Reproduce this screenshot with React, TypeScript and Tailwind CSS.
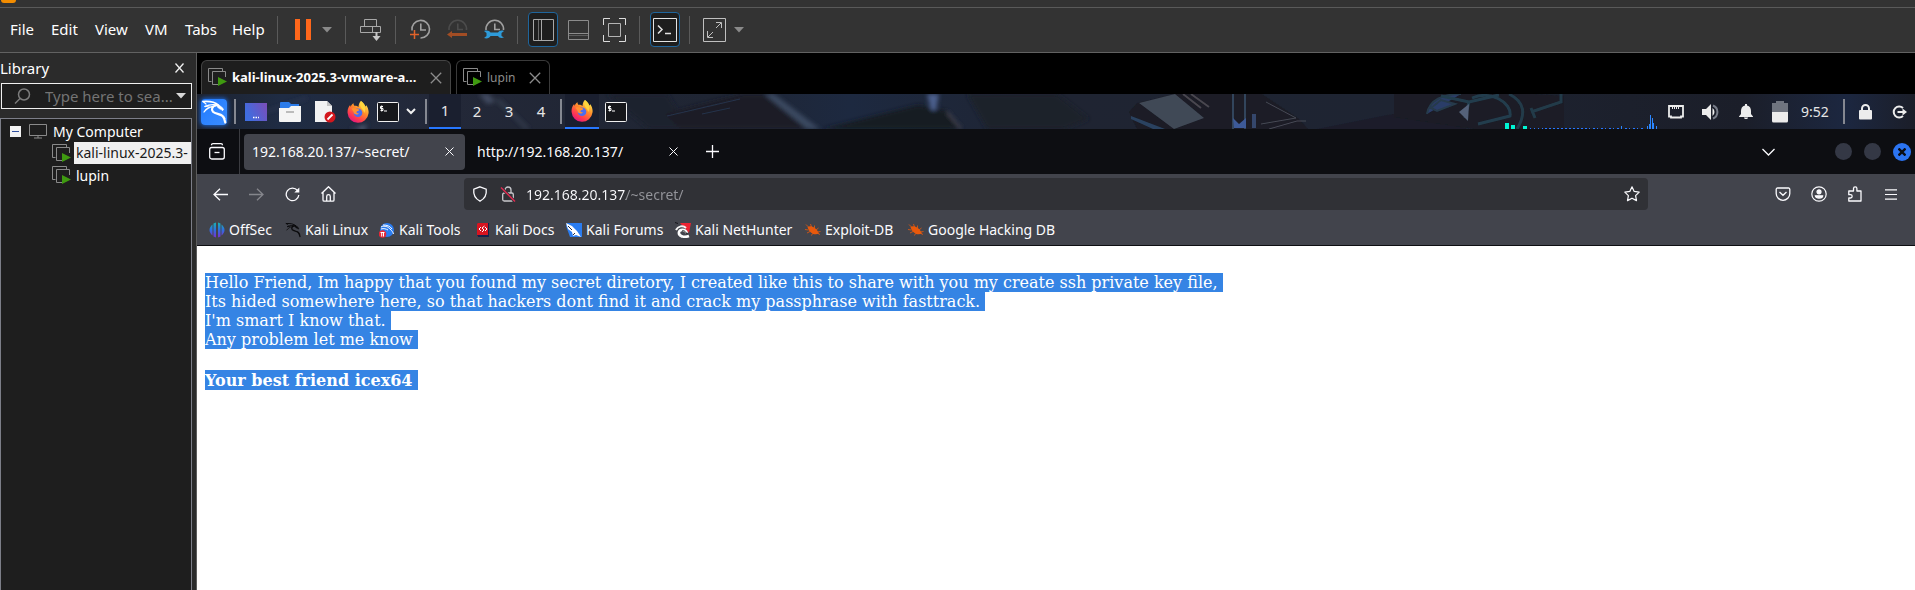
import React from 'react';

type IconProps = { className?: string };

const VmIcon = () => (
  <svg width="19" height="19" viewBox="0 0 19 19" fill="none" className="shrink-0">
    <path d="M3.500 13.500H.5V.5h14v3" stroke="#8a8a8a" />
    <path d="M10 16.500H4.500V3.500h13V9" stroke="#8a8a8a" />
    <path d="M10 9l9 4.500-9 4.500z" fill="#3f9a10" />
  </svg>
);

const Caret = ({ className }: IconProps) => (
  <svg width="10" height="6" viewBox="0 0 10 6" className={className || 'text-[#8a8a8a]'}>
    <path d="M0 0h10L5 5.500z" fill="currentColor" />
  </svg>
);

const Cross = ({ className }: IconProps) => (
  <svg width="12" height="12" viewBox="0 0 12 12" className={className} stroke="currentColor" strokeWidth="1.3">
    <path d="M.8.8l10.400 10.400M11.200.8L.8 11.200" />
  </svg>
);

const Dragon = ({ size }: { size: number }) => (
  <svg width={size} height={size} viewBox="0 0 26 26" fill="none" stroke="currentColor" strokeLinecap="round">
    <path d="M2 2.500c7-.5 12 .5 15.500 3.500" strokeWidth="1.600" />
    <path d="M4 7.500c4-2 8-2.200 12-1.500" strokeWidth="1.400" />
    <path d="M3 13c2-3 5-5 9-5.500" strokeWidth="1.300" />
    <path d="M2 2.500l3 2.500M4 7.500l4-.5" strokeWidth="1.200" />
    <path d="M16 5.500c3 .8 4.500 2.500 6.500 4.500l-1 1.800-1.500-1.500c-2-.6-3.500-1.300-4-3.800z" fill="currentColor" strokeWidth=".8" />
    <path d="M15 6.500c-4 .5-5 4-3 6.200 2.500 2.500 7 1.800 9.500 4.300 1.800 1.800 2.300 4 2.800 6.500" strokeWidth="2.200" />
    <path d="M19 15.500c3 .3 4.500 2 5 4" strokeWidth="1" />
  </svg>
);

const ClockFace = ({ color }: { color: string }) => (
  <g stroke={color} fill="none" strokeWidth="1.600">
    <path d="M2 11.500A8.800 8.800 0 1 1 10.500 19" />
    <path d="M10.800 4.500v6.500H16" />
  </g>
);

const HalfClock = ({ color }: { color: string }) => (
  <g stroke={color} fill="none" strokeWidth="1.600">
    <path d="M2 11A8.800 8.800 0 1 1 19.500 11" />
    <path d="M10.800 4.500v6H16" />
  </g>
);

const Firefox = ({ id }: { id: string }) => (
  <svg width="22" height="22" viewBox="0 0 22 22">
    <defs>
      <linearGradient id={id} x1="0.8" y1="0.1" x2="0.25" y2="0.95">
        <stop offset="0" stopColor="#ffe04a" />
        <stop offset="0.4" stopColor="#ff8a2a" />
        <stop offset="0.75" stopColor="#ff3c4e" />
        <stop offset="1" stopColor="#e5177c" />
      </linearGradient>
    </defs>
    <path d="M14 0c3 2.200 4 4 4.300 5.400.8-.2.800-.9.700-1.400C21 6.500 22 9.500 21.500 12.600A10.500 10.500 0 0 1 .6 12C.3 8.600 1.500 5.600 3.200 4c0 .8.100 1.300.4 1.800C4.400 4 5.500 2.800 6.500 2.200c0 1 .3 1.900.8 2.500C9 4.500 10.500 5 11.500 6c.1-2.500 1-4.800 2.500-6z" fill={`url(#${id})`} />
    <circle cx="11" cy="11.800" r="4.300" fill="#4a6df0" />
    <path d="M4.500 7.500c2-1 4-.6 5.500.4 1 .1 2 .3 2.300 1-.8 1.200-2.600 1-3 2.200.3 1 1.500 1.600 2.800 1.200-1.300 2-5 1.500-5.600-1.300C6 9.500 5 9 4.500 7.500z" fill="#ff9130" />
    <path d="M14 0c4 4 5.500 8 3.200 12-.3-2-1.200-3.200-2.200-4C13 5.500 12.500 2.500 14 0z" fill="#ffd63d" />
  </svg>
);

const Terminal = () => (
  <svg width="22" height="20" viewBox="0 0 22 20">
    <rect x=".5" y=".5" width="21" height="19" rx="1" fill="#16171b" stroke="#f0f0f0" />
    <path d="M6 4.500H3.500V6.500H6V8.500H3.500M4.700 3.500v6M7 9h3" stroke="#fff" fill="none" />
  </svg>
);

const Wallpaper = () => (
  <svg className="absolute inset-0 w-full h-full" viewBox="0 0 1718 35" preserveAspectRatio="none">
    <defs>
      <linearGradient id="sky">
        <stop offset="0" stopColor="#1d2330" />
        <stop offset="0.05" stopColor="#1f2c44" />
        <stop offset="0.14" stopColor="#232838" />
        <stop offset="0.3" stopColor="#1f2533" />
        <stop offset="0.38" stopColor="#1d2940" />
        <stop offset="0.5" stopColor="#1f2432" />
        <stop offset="0.7" stopColor="#1e2432" />
        <stop offset="0.9" stopColor="#1b1e29" />
        <stop offset="0.96" stopColor="#1c2740" />
        <stop offset="1" stopColor="#1b1e29" />
      </linearGradient>
      <filter id="soft">
        <feGaussianBlur stdDeviation="2" />
      </filter>
      <filter id="faint">
        <feGaussianBlur stdDeviation="0.6" />
      </filter>
    </defs>
    <rect width="1718" height="35" fill="url(#sky)" />
    <g filter="url(#soft)">
      <path d="M50 24L110 4M170 30l-16 5 14 2z" stroke="#2c3650" strokeWidth="2" fill="#566075" />
      <path d="M282 0l10 0 6 8-8 2z" fill="#414a5e" />
      <path d="M296 4l32 31h5L304 6z" fill="#323a4c" />
      <path d="M410 0h60l22 35h-40z" fill="#1e212d" />
      <path d="M468 20L545 0h22l44 35H484z" fill="#1b1e28" />
      <path d="M567 0h10l46 35h-13z" fill="#3a4861" />
      <path d="M625 35l96-24 30 6 15 18z" fill="#191a23" />
      <path d="M730 0h12l-3 16h-5z" fill="#4b5f8c" />
      <path d="M750 18l14 17" stroke="#4a4a56" strokeWidth="2" />
      <path d="M860 0l32 25-25 10H790l-20-35z" fill="#1c202c" />
    </g>
    <g filter="url(#faint)">
      <path d="M470 22L543 5M505 20l28-6" stroke="#25334b" />
      <path d="M932 18l8-9 38-9h87l36 24 10 11H940z" fill="#1a1c25" />
      <path d="M942 9l36-9 29 24-30 11z" fill="#414957" />
      <path d="M934 22l34 13h-12l-22-10z" fill="#2b4261" />
      <path d="M986 0l18 14M994 0l18 13" stroke="#4a4750" strokeWidth="2" />
      <path d="M1036 0v35M1048 0v35" stroke="#32455c" strokeWidth="2" />
      <path d="M1036 24l6 6 7-6v10h-12z" fill="#3d5a99" />
      <path d="M1057 20v14" stroke="#36476c" strokeWidth="4" />
      <path d="M1064 30l35-6-30-16M1072 35l28-8h9" stroke="#484a56" fill="none" />
      <path d="M1120 35l70-14 40-6 40 20z" fill="#1b1d29" />
      <path d="M1197 0h140l30 2v33h-90l-80-12z" fill="#1a1c25" />
      <path d="M1230 20c2-14 16-20 34-20M1234 14l10-8 14 4-18 7z" stroke="#273a4c" strokeWidth="2" fill="#2c3c68" />
      <path d="M1244 2l28 6 30-7M1272 8l-4 16M1275 4c18-8 40 4 38 18l-32 8" stroke="#243e4e" strokeWidth="3" fill="none" />
      <path d="M1262 18l10-8-1 17z" fill="#55627a" />
      <path d="M1312 0c16 8 17 20 8 35M1334 18l30-10V0M1334 14l4 10" stroke="#233a4a" strokeWidth="3" fill="none" />
    </g>
  </svg>
);

const CpuGraph = () => (
  <svg width="153" height="16" viewBox="0 0 153 16" className="self-end">
    <path d="M0 10h4v6H0zM6 12h4v4H6zM18 13h4v3h-4z" fill="#00f5d4" />
    <path d="M25 15.500h60" stroke="#2777ff" strokeDasharray="1 3" />
    <path d="M40 15.500h100" stroke="#2777ff" strokeDasharray="2 2 1 3" />
    <path d="M116 13h1v3h-1zM142 13h1v3h-1zM144 11h1v5h-1zM145 2h1v14h-1zM147 5h1v11h-1zM148 10h1v6h-1zM151 13h1v3h-1z" fill="#2a86ff" />
  </svg>
);

const Bug = () => (
  <svg width="16" height="16" viewBox="0 0 16 16" fill="#e8590c">
    <path d="M2.500 5C6 3 11 5.500 14 11.500 10 13.500 4.500 12 2.500 5z" />
    <path d="M1 2.500l3 3M5.500 2l1 3M9.500 3.500v2.500M13.500 6l-2.500 2M0 7.500l3.500.5M2 11l3-1.500M6.500 13.500l1-2M15.500 9.500l-3 .5M15 12.500l-2-1" stroke="#e8590c" strokeWidth=".8" />
  </svg>
);

const toolSep = <div className="w-px h-7 bg-[#5a5a5a]" />;
const panelSep = <div className="w-[2px] h-[25px] bg-[#858891]" />;

const MenuBar: React.FC = () => (
  <header className="bg-[#333333]">
    <div className="h-2 border-b border-[#5a5a5a] pl-px">
      <div className="w-[15px] h-[3px] rounded-b-sm bg-[#f28c00]" />
    </div>
    <div className="flex items-center h-[45px] border-b border-[#626262] pb-px">
      <nav className="flex items-center pl-[10px] gap-[18px] text-[15px] text-white">
        <button className="w-[23px] text-left">File</button>
        <button className="w-[26px] text-left">Edit</button>
        <button className="w-8 text-left">View</button>
        <button className="w-[22px] text-left">VM</button>
        <button className="w-[29px] text-left">Tabs</button>
        <button className="w-8 text-left">Help</button>
      </nav>
      <div className="flex items-center pl-[13px]">
        {toolSep}
        <button aria-label="Suspend" className="flex gap-[6px] ml-[17px]">
          <span className="w-[5px] h-[21px] bg-[#ff671b]" />
          <span className="w-[5px] h-[21px] bg-[#ff671b]" />
        </button>
        <button aria-label="Power options" className="ml-[11px] mr-[13px]">
          <Caret />
        </button>
        {toolSep}
        <button aria-label="Send Ctrl+Alt+Del" className="mx-[14px]">
          <svg width="21" height="22" viewBox="0 0 21 22" fill="none" stroke="#a8a8a8">
            <path d="M4.500 7.500v-7h12v7M.5 7.500h20v6H.5zM12.500 7.500v6" />
            <path d="M16.500 13v6" strokeWidth="2" stroke="#c8c8c8" />
            <path d="M12.500 17h8l-4 5z" fill="#c8c8c8" stroke="none" />
          </svg>
        </button>
        {toolSep}
        <div className="flex items-center gap-4 pl-[14px] pr-3">
          <button aria-label="Take snapshot">
            <svg width="21" height="21" viewBox="0 0 21 21">
              <ClockFace color="#a0a0a0" />
              <path d="M0 15.500h9M4.500 11v9" stroke="#e2632a" strokeWidth="1.500" />
            </svg>
          </button>
          <button aria-label="Revert snapshot">
            <svg width="21" height="21" viewBox="0 0 21 21">
              <HalfClock color="#4c4c4c" />
              <path d="M0 15.500l5-3.500v2h15v3H5v2z" fill="#a24d24" />
            </svg>
          </button>
          <button aria-label="Manage snapshots">
            <svg width="21" height="21" viewBox="0 0 21 21">
              <HalfClock color="#a0a0a0" />
              <path d="M0 12c3-1 5.500-.3 6.500 1.500H14c1-1.800 3.500-2.500 6-1.500l-2.500 2v3l2.500 1.500c-2.500 1-5 .5-6-1.500H6.500C5.500 19 3 20 0 19l2.500-2v-3z" fill="#2e9bd9" />
            </svg>
          </button>
        </div>
        {toolSep}
        <button aria-label="Show library" className="flex items-center justify-center w-[30px] h-[35px] ml-[10px] rounded-sm border border-[#1f659c] bg-[#1e1e1e]">
          <svg width="21" height="22" viewBox="0 0 21 22" fill="none" stroke="#a8a8a8">
            <path d="M.5.5h20v21H.5z" />
            <path d="M8.500.5v21" />
            <path d="M5.500 1v20" stroke="#6c6c6c" />
          </svg>
        </button>
        <button aria-label="Show thumbnail bar" className="ml-[10px]">
          <svg width="22" height="20" viewBox="0 0 22 20" fill="none" stroke="#8c8c8c">
            <path d="M.5.5h20v19H.5zM.5 13.500h20" />
            <path d="M1 15.500h19" stroke="#5c5c5c" />
          </svg>
        </button>
        <button aria-label="Full screen" className="mx-[13px]">
          <svg width="23" height="24" viewBox="0 0 23 24" fill="none" stroke="#b4b4b4">
            <path d="M.5 7V.5H7M16 .5h6.500V7M22.500 17v6.500H16M7 23.500H.5V17" stroke="#dcdcdc" />
            <path d="M5.500 5.500h12v13h-12z" />
          </svg>
        </button>
        {toolSep}
        <button aria-label="Console view" className="flex items-center justify-center w-[30px] h-[35px] ml-[10px] mr-[9px] rounded-sm border border-[#1f659c] bg-[#1e1e1e]">
          <svg width="24" height="24" viewBox="0 0 24 24" fill="none" stroke="#e4e4e4">
            <path d="M.5.5h23v23H.5z" />
            <path d="M5 7.500l4 4-4 4M12 15.500h6" strokeWidth="1.500" />
          </svg>
        </button>
        {toolSep}
        <button aria-label="Stretch guest" className="ml-[13px]">
          <svg width="23" height="24" viewBox="0 0 23 24" fill="none" stroke="#c0c0c0">
            <path d="M.5.5h22v23H.5z" />
            <path d="M4.500 13v6.500H10M13 4.500h5.500V10M5 19l5-5M13 10l5-5" />
          </svg>
        </button>
        <button aria-label="Stretch options" className="ml-2">
          <Caret />
        </button>
      </div>
    </div>
  </header>
);

const Library: React.FC = () => (
  <aside className="flex flex-col w-[197px] shrink-0 border-r border-[#5c5c5c] bg-[#2b2b2b] text-[14px] text-white">
    <div className="flex items-center justify-between h-[30px] pr-3">
      <h2 className="text-[15px]">Library</h2>
      <button aria-label="Close library">
        <svg width="9" height="10" viewBox="0 0 9 10" stroke="#f0f0f0" strokeWidth="1.300">
          <path d="M.5.5l8 9M8.500.5l-8 9" />
        </svg>
      </button>
    </div>
    <label className="flex items-center h-[26px] mr-1 ml-px border border-[#f0f0f0] bg-[#1e1e1e] pl-3 pr-[5px]">
      <svg width="17" height="17" viewBox="0 0 17 17" fill="none" stroke="#7c7c7c" strokeWidth="1.500" className="shrink-0">
        <circle cx="10" cy="6.500" r="5.500" />
        <path d="M6 10.500L1 15.500" />
      </svg>
      <input className="flex-1 min-w-0 ml-[14px] outline-none placeholder-[#747474] text-[15px]" placeholder="Type here to sea..." />
      <Caret className="shrink-0 text-[#d8d8d8]" />
    </label>
    <ul className="flex-1 mt-[9px] mr-1 border border-b-0 border-[#7c7e88] bg-[#1e1e1e] pt-px">
      <li className="flex items-center h-[22px] pl-[9px]">
        <button aria-label="Collapse" className="flex items-center justify-center w-[11px] h-[11px] bg-[#f2f2f2]">
          <span className="w-[7px] h-px bg-[#3050a0]" />
        </button>
        <svg width="18" height="15" viewBox="0 0 18 15" fill="none" stroke="#8a8a8a" className="ml-2">
          <path d="M.5.5h17v11H.5zM9 12v2M5 14h8" />
        </svg>
        <span className="ml-[6px]">My Computer</span>
      </li>
      <li className="flex items-center h-[22px] pl-[51px]">
        <VmIcon />
        <span className="h-[22px] ml-[3px] pl-[2px] flex-1 whitespace-nowrap leading-[22px] bg-[#f0f0f0] text-[#1a1a1a]">kali-linux-2025.3-</span>
      </li>
      <li className="flex items-center h-[22px] pl-[51px]">
        <VmIcon />
        <span className="ml-[5px]">lupin</span>
      </li>
    </ul>
  </aside>
);

const VmTabs: React.FC = () => (
  <div className="flex items-end h-[41px] pl-1 gap-[5px] bg-black">
    <div className="flex items-center w-[250px] h-[34px] rounded-t-md border border-b-0 border-[#444] bg-[#1e1e1e] pl-[6px] pr-2">
      <VmIcon />
      <button className="flex-1 ml-[5px] text-[13px] font-bold text-left text-white whitespace-nowrap">kali-linux-2025.3-vmware-a...</button>
      <button aria-label="Close tab">
        <Cross className="text-[#8c8c8c]" />
      </button>
    </div>
    <div className="flex items-center w-[94px] h-[34px] rounded-t-md border border-b-0 border-[#3a3a3a] bg-black pl-[6px] pr-2">
      <VmIcon />
      <button className="flex-1 ml-[5px] text-[12px] text-left text-[#8c8c8c]">lupin</button>
      <button aria-label="Close tab">
        <Cross className="text-[#8c8c8c]" />
      </button>
    </div>
  </div>
);

const KaliPanel: React.FC = () => (
  <div className="relative h-[35px] overflow-hidden">
    <Wallpaper />
    <div className="relative flex items-center h-full pl-1 pr-2 text-[15px] text-[#e6e6e6]">
      <button aria-label="Applications" className="flex items-center justify-center w-[26px] h-[26px] mr-[7px] rounded-sm bg-linear-to-br from-[#1f7bff] to-[#3a8cff] shadow-[0_0_4px_1px_#1d5fc4] text-white">
        <Dragon size={26} />
      </button>
      {panelSep}
      <button aria-label="Show desktop" className="ml-[9px]">
        <svg width="22" height="18" viewBox="0 0 22 18">
          <defs>
            <linearGradient id="desk" x1="0" y1="0.4" x2="1" y2="0">
              <stop offset="0" stopColor="#3f6de0" />
              <stop offset="1" stopColor="#7b4db8" />
            </linearGradient>
          </defs>
          <rect width="22" height="18" fill="url(#desk)" />
          <path d="M8 14.500h6" stroke="#fff" strokeWidth="1.500" strokeDasharray="1.500 1" />
        </svg>
      </button>
      <button aria-label="Files" className="ml-3">
        <svg width="22" height="20" viewBox="0 0 22 20">
          <path d="M1 1a1 1 0 0 1 1-1h8l2 2h8v8H1z" fill="#2b7bea" />
          <path d="M0 6h10l2-2h10v15a1 1 0 0 1-1 1H1a1 1 0 0 1-1-1z" fill="#f4f4f4" />
          <path d="M7 10h8" stroke="#a8a8a8" strokeWidth="1.500" />
        </svg>
      </button>
      <button aria-label="Text editor" className="ml-[14px]">
        <svg width="21" height="22" viewBox="0 0 21 22">
          <path d="M0 0h12l5 5v16H0z" fill="#f2f2f2" />
          <path d="M12 0l5 5h-5z" fill="#c4c4c4" />
          <circle cx="15" cy="16" r="5.500" fill="#d3171d" />
          <path d="M12.500 18.500l5-5" stroke="#fff" strokeWidth="1.800" />
        </svg>
      </button>
      <button aria-label="Firefox" className="ml-[11px]">
        <Firefox id="fox-launcher" />
      </button>
      <button aria-label="Terminal" className="ml-2">
        <Terminal />
      </button>
      <button aria-label="More terminals" className="ml-[7px] mr-[9px]">
        <svg width="10" height="7" viewBox="0 0 10 7" fill="none" stroke="#f0f0f0" strokeWidth="2">
          <path d="M1 1l4 4 4-4" />
        </svg>
      </button>
      {panelSep}
      <button className="w-8 h-full ml-[2px] border-b-2 border-[#2777ff] bg-[#1a1f2f]">1</button>
      <button className="w-8 h-full">2</button>
      <button className="w-8 h-full">3</button>
      <button className="w-8 h-full mr-[3px]">4</button>
      {panelSep}
      <button aria-label="Firefox window" className="flex items-center justify-center w-[34px] h-full ml-[3px] border-b-2 border-[#2777ff] bg-[#1a1f2f]">
        <Firefox id="fox-task" />
      </button>
      <button aria-label="Terminal window" className="ml-[6px]">
        <Terminal />
      </button>
      <div className="flex items-center h-full ml-auto">
        <CpuGraph />
        <svg width="16" height="14" viewBox="0 0 16 14" className="ml-[10px]">
          <path d="M1 1h14v10.500h-2v1H3v-1H1z" fill="none" stroke="#ececec" strokeWidth="1.800" />
          <path d="M4 3h8" stroke="#ececec" strokeWidth="2" strokeDasharray="1 1" />
        </svg>
        <svg width="18" height="16" viewBox="0 0 18 16" className="ml-[18px]">
          <path d="M0 5h4l5-5v16l-5-5H0z" fill="#ececec" />
          <path d="M10.500 4a5 5 0 0 1 0 8z" fill="#ececec" />
          <path d="M11 1.500a7 7 0 0 1 0 13" fill="none" stroke="#777c88" strokeWidth="2" />
        </svg>
        <svg width="14" height="15" viewBox="0 0 14 15" fill="#ececec" className="ml-[19px]">
          <path d="M6 0h2v1.500c3 .8 4 3 4 5.500v3l2 2.500v.5H0v-.5L2 10V7c0-2.500 1-4.700 4-5.500zM5 13.500h4c0 2-4 2-4 0z" />
        </svg>
        <svg width="16" height="22" viewBox="0 0 16 22" className="ml-[19px]">
          <path d="M4 0h8v2h4v9H0V2h4z" fill="#6f747f" />
          <path d="M0 11h16v9a1.500 1.500 0 0 1-1.500 1.500h-13A1.500 1.500 0 0 1 0 20z" fill="#ececec" />
        </svg>
        <time className="w-[30px] ml-[13px] mr-3 text-[14px]">9:52</time>
        {panelSep}
        <button aria-label="Lock screen" className="ml-[14px]">
          <svg width="13" height="16" viewBox="0 0 13 16">
            <path d="M3 7V4.500a3.500 3.500 0 0 1 7 0V7" fill="none" stroke="#ececec" strokeWidth="2" />
            <rect y="6" width="13" height="9.500" rx="1" fill="#ececec" />
          </svg>
        </button>
        <button aria-label="Log out" className="ml-5">
          <svg width="15" height="14" viewBox="0 0 15 14" fill="none" stroke="#ececec" strokeWidth="2">
            <path d="M11 3A5.500 5.500 0 1 0 11 11M5.500 7H12" />
            <path d="M10.500 3.500L15 7l-4.500 3.500z" fill="#ececec" stroke="none" />
          </svg>
        </button>
      </div>
    </div>
  </div>
);

const TabClose = () => (
  <svg width="9" height="9" viewBox="0 0 9 9" stroke="#fbfbfe">
    <path d="M.5.5l8 8M8.500.5l-8 8" />
  </svg>
);

const BrowserTabs: React.FC = () => (
  <div className="flex items-center h-[45px] bg-[#0d0e12] text-[14px] text-[#fbfbfe]">
    <button aria-label="Recent tabs" className="flex items-center justify-center w-[43px] h-full border-r border-[#3a3b40] pr-[2px]">
      <svg width="16" height="17" viewBox="0 0 16 17" fill="none" stroke="#fbfbfe" strokeWidth="1.300">
        <path d="M2.500 2.200c0-1 .6-1.500 1.500-1.500h8c.9 0 1.500.5 1.500 1.500" />
        <rect x=".7" y="4.500" width="14.600" height="11.500" rx="2" />
        <path d="M5.500 9.500h5" />
      </svg>
    </button>
    <div className="flex items-center justify-between w-[221px] h-9 ml-1 rounded bg-[#42444c] px-2">
      <button>192.168.20.137/~secret/</button>
      <button aria-label="Close tab" className="mr-[3px]">
        <TabClose />
      </button>
    </div>
    <div className="flex items-center justify-between w-[225px] h-9 px-3">
      <button>http://192.168.20.137/</button>
      <button aria-label="Close tab">
        <TabClose />
      </button>
    </div>
    <button aria-label="New tab" className="ml-4">
      <svg width="13" height="13" viewBox="0 0 13 13" stroke="#fbfbfe" strokeWidth="1.300">
        <path d="M6.500 0v13M0 6.500h13" />
      </svg>
    </button>
    <button aria-label="List all tabs" className="ml-auto">
      <svg width="13" height="8" viewBox="0 0 13 8" fill="none" stroke="#fbfbfe" strokeWidth="1.300">
        <path d="M.5 1l6 6 6-6" />
      </svg>
    </button>
    <div className="flex items-center gap-3 ml-[60px] mr-1">
      <button aria-label="Minimize" className="w-[17px] h-[17px] rounded-full bg-[#343845]" />
      <button aria-label="Maximize" className="w-[17px] h-[17px] rounded-full bg-[#343845]" />
      <button aria-label="Close window" className="flex items-center justify-center w-[18px] h-[18px] rounded-full bg-[#2b74f2]">
        <svg width="8" height="8" viewBox="0 0 8 8" stroke="#0b0e16" strokeWidth="2.400">
          <path d="M.5.5l7 7M7.500.5l-7 7" />
        </svg>
      </button>
    </div>
  </div>
);

const NavBar: React.FC = () => (
  <div className="flex items-center h-10 px-4 text-[#fbfbfe]">
    <div className="flex items-center gap-[21px]">
      <button aria-label="Back">
        <svg width="15" height="13" viewBox="0 0 15 13" fill="none" stroke="currentColor" strokeWidth="1.300">
          <path d="M15 6.500H1M7 .7L1 6.500l6 5.800" />
        </svg>
      </button>
      <button aria-label="Forward" className="text-[#85868c]">
        <svg width="15" height="13" viewBox="0 0 15 13" fill="none" stroke="currentColor" strokeWidth="1.300">
          <path d="M0 6.500h14M8 .7l6 5.800-6 5.800" />
        </svg>
      </button>
      <button aria-label="Reload">
        <svg width="15" height="15" viewBox="0 0 15 15" fill="none" stroke="currentColor" strokeWidth="1.300">
          <path d="M12.500 3.500A6.300 6.300 0 1 0 13.800 8" />
          <path d="M14.300.5v5h-5z" fill="currentColor" stroke="none" />
        </svg>
      </button>
      <button aria-label="Home">
        <svg width="15" height="16" viewBox="0 0 15 16" fill="none" stroke="currentColor" strokeWidth="1.300">
          <path d="M.5 7.500l7-6.800 7 6.800M2 6.500V14a1.200 1.200 0 0 0 1.200 1.200h8.600A1.200 1.200 0 0 0 13 14V6.500" />
          <path d="M5.700 15v-4.500a1.800 1.800 0 0 1 3.600 0V15" />
        </svg>
      </button>
    </div>
    <div className="flex items-center flex-1 h-8 ml-32 rounded bg-[#303136] px-2">
      <svg width="16" height="16" viewBox="0 0 16 16" fill="none" stroke="currentColor" strokeWidth="1.300" className="shrink-0">
        <path d="M8 .8l6.200 2.400c.6 5-1.200 9.500-6.200 12-5-2.500-6.800-7-6.200-12z" />
      </svg>
      <svg width="16" height="16" viewBox="0 0 16 16" fill="none" className="ml-3 shrink-0">
        <rect x="2.700" y="7" width="10.600" height="8" rx="1.500" stroke="#c8c8cc" strokeWidth="1.300" />
        <path d="M5 7V4a3 3 0 0 1 6 0v3" stroke="#c8c8cc" strokeWidth="1.300" />
        <path d="M1 1.500l14 14" stroke="#303136" strokeWidth="3" />
        <path d="M1 1.500l14 14" stroke="#e22850" strokeWidth="1.400" />
      </svg>
      <input
        aria-label="Address"
        defaultValue="192.168.20.137/~secret/"
        className="flex-1 min-w-0 ml-[10px] text-[14px] outline-none bg-[linear-gradient(90deg,#fbfbfe_100px,#94959b_100px)] bg-clip-text text-transparent"
      />
      <button aria-label="Bookmark this page">
        <svg width="16" height="16" viewBox="0 0 16 16" fill="none" stroke="currentColor" strokeWidth="1.200" strokeLinejoin="round">
          <path d="M8 .8l2.200 4.600 5 .7-3.600 3.500.9 5L8 12.200l-4.500 2.400.9-5L.8 6.100l5-.7z" />
        </svg>
      </button>
    </div>
    <div className="flex items-center gap-5 ml-[127px]">
      <button aria-label="Save to Pocket">
        <svg width="16" height="16" viewBox="0 0 16 16" fill="none" stroke="currentColor" strokeWidth="1.300">
          <path d="M2.500 2h11a1.300 1.300 0 0 1 1.300 1.300V7.500a6.800 6.800 0 0 1-13.600 0V3.300A1.300 1.300 0 0 1 2.500 2zM4.500 6L8 9.300 11.500 6" />
        </svg>
      </button>
      <button aria-label="Account">
        <svg width="16" height="16" viewBox="0 0 16 16" fill="none" stroke="currentColor" strokeWidth="1.200">
          <circle cx="8" cy="8" r="7.200" />
          <circle cx="8" cy="5.800" r="2" fill="currentColor" />
          <path d="M4.300 9.800h7.400c0 3-7.400 3-7.400 0z" fill="currentColor" />
        </svg>
      </button>
      <button aria-label="Extensions">
        <svg width="16" height="16" viewBox="0 0 16 16" fill="none" stroke="currentColor" strokeWidth="1.300" strokeLinejoin="round">
          <path d="M6.500 5V2.500a1.700 1.700 0 0 1 3.400 0V5H14v10H1.800v-3h1.700a1.600 1.600 0 0 0 0-3.300H1.800V5z" />
        </svg>
      </button>
      <button aria-label="Menu" className="px-[2px]">
        <svg width="12" height="11" viewBox="0 0 12 11" stroke="currentColor" strokeWidth="1.200">
          <path d="M0 .8h12M0 5.500h12M0 10.200h12" />
        </svg>
      </button>
    </div>
  </div>
);

const bookmarks = [
  {
    name: 'OffSec',
    width: 'w-[76px]',
    icon: (
      <svg width="16" height="16" viewBox="0 0 16 16">
        <defs>
          <linearGradient id="offsec" x1="0" y1="0" x2="0" y2="1">
            <stop offset="0" stopColor="#17b3b0" />
            <stop offset="0.5" stopColor="#2f6fe0" />
            <stop offset="1" stopColor="#7a2fd0" />
          </linearGradient>
        </defs>
        <path d="M7 .5v15l-2.500-1V1.500zM9 .5v15l2.500-1V1.500zM3.500 2.500v11C-.5 10-.5 6 3.500 2.500zM12.500 2.500v11c4-3.500 4-7.500 0-11z" fill="url(#offsec)" />
      </svg>
    ),
  },
  {
    name: 'Kali Linux',
    width: 'w-[94px]',
    icon: (
      <span className="block text-[#0b0b0d]">
        <Dragon size={16} />
      </span>
    ),
  },
  {
    name: 'Kali Tools',
    width: 'w-24',
    icon: (
      <svg width="16" height="16" viewBox="0 0 16 16">
        <circle cx="8" cy="8" r="7" fill="#2a7cf0" />
        <path d="M2 5c4-2 7 0 9 2s3 3 3.500 5M4 3c4 0 7 1 9 4M2 7c3-1 5 0 7 1" stroke="#fff" fill="none" />
        <circle cx="3.500" cy="12" r="3.800" fill="#e52838" />
        <path d="M1.500 10.500h4M2.700 10.500v4M4.500 10.500v4" stroke="#fff" />
      </svg>
    ),
  },
  {
    name: 'Kali Docs',
    width: 'w-[91px]',
    icon: (
      <svg width="16" height="16" viewBox="0 0 16 16">
        <path d="M2 2l1-1h11v14H3l-1-1z" fill="#d81420" />
        <path d="M2 13h12v2H3zM13 1h1v14h-1z" fill="#16224c" />
        <path d="M6 5L4 7l2 2M10 9l2-2-2-2M9.500 4L7 6l2 2-2 2" stroke="#fff" fill="none" />
      </svg>
    ),
  },
  {
    name: 'Kali Forums',
    width: 'w-[109px]',
    icon: (
      <svg width="16" height="16" viewBox="0 0 16 16">
        <path d="M1 1h15v14H4L0 4z" fill="#2a7cf0" />
        <path d="M0 1l6 3 5 5 4 6-5-2-3 1-1-4-4-3z" fill="#fff" />
        <path d="M2 4l4 4M7 13l2-2" stroke="#202a40" />
      </svg>
    ),
  },
  {
    name: 'Kali NetHunter',
    width: 'w-[130px]',
    icon: (
      <svg width="16" height="16" viewBox="0 0 16 16">
        <path d="M5 1h11l-2 10z" fill="#ee2433" />
        <path d="M14 14c-5 2-11 0-10-4 1-3 6-3 8 1" fill="none" stroke="#fff" strokeWidth="2.600" />
        <path d="M1 8c2-4 7-5 10-2M4 13l3 2" stroke="#f4f4f4" strokeWidth="2" fill="none" />
        <path d="M0 .5l3 1M7 9c2-1 4 1 5 3" stroke="#15151a" fill="none" />
      </svg>
    ),
  },
  { name: 'Exploit-DB', width: 'w-[103px]', icon: <Bug /> },
  { name: 'Google Hacking DB', width: 'w-[160px]', icon: <Bug /> },
];

const BookmarksBar: React.FC = () => (
  <nav className="flex items-center h-8 pl-3 border-b border-[#0d0e12] text-[14px] text-[#fbfbfe]">
    {bookmarks.map((b) => (
      <a key={b.name} href="#" className={`flex items-center gap-1 whitespace-nowrap ${b.width}`}>
        <span className="shrink-0">{b.icon}</span>
        {b.name}
      </a>
    ))}
  </nav>
);

const Page: React.FC = () => (
  <main className="flex-1 bg-white px-2 pt-[27px] text-base text-white font-['DejaVu_Serif',serif] leading-[19px]">
    <p className="flex flex-col items-start leading-[19px]">
      <span className="bg-[#3584e4] pr-[5px]">
        Hello Friend, Im happy that you found my secret diretory, I created like this to share with you my create ssh private key file,
      </span>
      <span className="bg-[#3584e4] pr-[5px]">Its hided somewhere here, so that hackers dont find it and crack my passphrase with fasttrack.</span>
      <span className="bg-[#3584e4] pr-[5px]">I'm smart I know that.</span>
      <span className="bg-[#3584e4] pr-[5px]">Any problem let me know</span>
    </p>
    <h4 className="flex mt-[21px] font-bold leading-[19px]">
      <span className="bg-[#3584e4] pt-px pr-[6px]">Your best friend icex64</span>
    </h4>
  </main>
);

const App: React.FC = () => {
  return (
    <div className="flex flex-col min-h-screen bg-black font-['Noto_Sans',sans-serif]">
      <MenuBar />
      <div className="flex flex-1">
        <Library />
        <div className="flex flex-col flex-1 min-w-0">
          <VmTabs />
          <KaliPanel />
          <BrowserTabs />
          <div className="bg-[#42444c]">
            <NavBar />
            <BookmarksBar />
          </div>
          <Page />
        </div>
      </div>
    </div>
  );
};
export default App;
